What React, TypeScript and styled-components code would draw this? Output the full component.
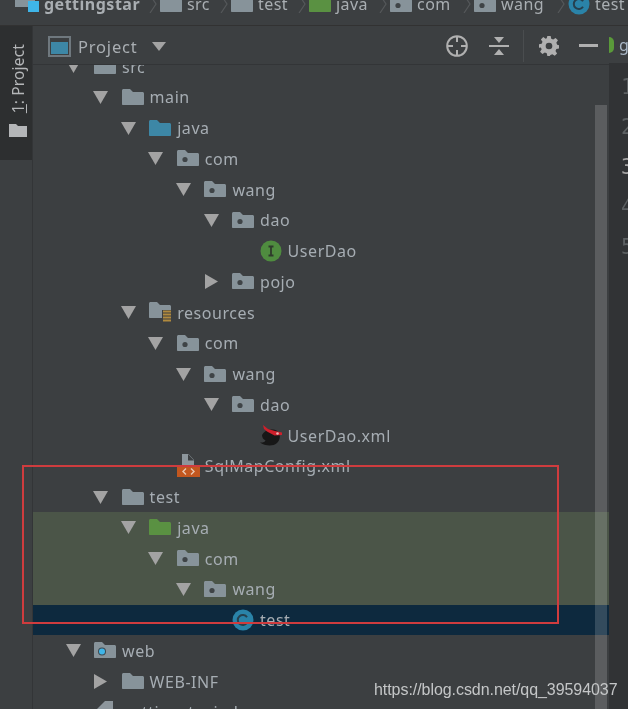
import React from "react";
import styled, { createGlobalStyle } from "styled-components";

const Global = createGlobalStyle`
  html, body { margin: 0; padding: 0; background: #3c3f41; }
  #root { width: 628px; height: 709px; overflow: hidden; }
`;

const FONT = `"Noto Sans", "DejaVu Sans", sans-serif`;

const Window = styled.div`
  position: relative;
  width: 628px;
  height: 709px;
  overflow: hidden;
  display: flex;
  flex-direction: column;
  background: #3c3f41;
  color: #a6adb3;
  font-family: ${FONT};
  filter: blur(0.45px);
`;

const Breadcrumb = styled.div`
  flex: none;
  height: 26px;
  box-sizing: border-box;
  border-bottom: 1px solid #323232;
  overflow: hidden;
  background: #3c3f41;
`;
const CrumbTrail = styled.div`
  display: flex;
  align-items: center;
  height: 18px;
  margin-top: -5px;
  padding-left: 15px;
`;
const Crumb = styled.span<{ $w: number }>`
  flex: none;
  width: ${(p) => p.$w}px;
  display: flex;
  align-items: center;
  gap: 5px;
  font-size: 16px;
  line-height: 18px;
  color: #a9aeb2;
`;
const CrumbName = styled.span<{ $bold?: boolean }>`
  font-weight: ${(p) => (p.$bold ? 700 : 400)};
  letter-spacing: ${(p) => (p.$bold ? "0.5px" : "0.45px")};
`;
const Chevron = styled.svg`
  flex: none;
  width: 10px;
  height: 18px;
  margin-left: -12px;
  margin-right: 2px;
`;

const Body = styled.div`
  flex: 1;
  min-height: 0;
  display: flex;
`;
const Strip = styled.aside`
  flex: none;
  width: 33px;
  box-sizing: border-box;
  border-right: 1px solid #333537;
  background: #3c3f41;
`;
const StripTab = styled.div`
  height: 134px;
  background: #2d2f30;
  display: flex;
  flex-direction: column;
  align-items: center;
  padding: 18px 0 0 4px;
  box-sizing: border-box;
  gap: 10px;
`;
const StripLabel = styled.span`
  writing-mode: vertical-rl;
  transform: rotate(180deg);
  font-size: 15.5px;
  line-height: 20px;
  color: #b4b6b8;
  letter-spacing: 0.15px;
`;
const Underlined = styled.span`
  text-decoration: underline;
`;

const Panel = styled.section`
  position: relative;
  flex: none;
  width: 576px;
  display: flex;
  flex-direction: column;
  overflow: hidden;
`;
const PanelHeader = styled.header`
  position: relative;
  z-index: 1;
  flex: none;
  height: 39px;
  box-sizing: border-box;
  display: flex;
  align-items: center;
  padding: 2px 11px 0 15px;
  border-bottom: 1px solid #333537;
  background: #3c3f41;
`;
const PanelTitle = styled.span`
  margin-left: 7px;
  font-size: 16.5px;
  color: #a9aeb2;
  letter-spacing: 0.8px;
`;
const Caret = styled.svg`
  width: 14px;
  height: 9px;
  margin-left: 14px;
`;
const HeaderTools = styled.div`
  margin-left: auto;
  display: flex;
  align-items: center;
`;
const Divider = styled.span`
  width: 1px;
  height: 32px;
  background: #4a4d4f;
  margin: 0 15px 0 14px;
`;

const Tree = styled.div`
  flex: 1;
  min-height: 0;
  margin-top: -13.8px;
`;
const Row = styled.div<{ $tone?: "green" | "selected" }>`
  height: 30.75px;
  display: flex;
  align-items: center;
  background: ${(p) =>
    p.$tone === "green" ? "#4b5548" : p.$tone === "selected" ? "#0d293e" : "transparent"};
`;
const Indent = styled.span<{ $depth: number }>`
  flex: none;
  width: ${(p) => 32 + p.$depth * 27.6}px;
`;
const ArrowSlot = styled.span`
  flex: none;
  width: 16px;
  height: 16px;
  margin-right: 13px;
  display: flex;
  align-items: center;
  justify-content: center;
`;
const IconSlot = styled.span`
  flex: none;
  width: 22px;
  height: 22px;
  display: flex;
  align-items: center;
  justify-content: center;
`;
const Label = styled.span`
  margin-left: 6px;
  font-size: 16px;
  line-height: 20px;
  letter-spacing: 0.55px;
  color: #a6adb3;
  white-space: nowrap;
`;

const Scrollbar = styled.div`
  position: absolute;
  z-index: 2;
  right: 2px;
  top: 79px;
  bottom: 0;
  width: 12px;
  background: rgba(255, 255, 255, 0.16);
`;

const Editor = styled.aside`
  flex: 1;
  min-width: 0;
  display: flex;
  flex-direction: column;
  background: #313335;
  overflow: hidden;
`;
const EditorTab = styled.div`
  flex: none;
  height: 37px;
  display: flex;
  align-items: center;
  gap: 5px;
  background: #3c3f41;
  font-size: 16px;
  color: #a9b7c6;
`;
const TabDot = styled.span`
  flex: none;
  width: 5px;
  height: 16px;
  background: #5a9a3a;
  border-radius: 0 8px 8px 0;
`;
const LineNumbers = styled.div`
  padding: 4px 0 0 12px;
  display: flex;
  flex-direction: column;
  font-family: "DejaVu Sans Mono", monospace;
  font-size: 21px;
  white-space: nowrap;
`;
const LineNumber = styled.span<{ $active?: boolean }>`
  height: 40px;
  line-height: 40px;
  color: ${(p) => (p.$active ? "#a4a3a3" : "#5c6062")};
`;

const Annotation = styled.div`
  position: absolute;
  z-index: 3;
  left: 22px;
  top: 465px;
  width: 537px;
  height: 159px;
  box-sizing: border-box;
  border: 2px solid #cf3c3e;
`;
const Watermark = styled.div`
  position: absolute;
  z-index: 4;
  left: 374px;
  top: 680px;
  font-family: "Liberation Sans", Arial, sans-serif;
  font-size: 16px;
  line-height: 20px;
  letter-spacing: -0.06px;
  color: #c4c6c7;
  white-space: nowrap;
`;

type IconKind =
  | "folder" | "blue" | "green" | "pkg" | "res" | "iface" | "cls" | "bird" | "xml" | "web" | "file";

const FOLDER = "M0 1.5C0 .7.7 0 1.5 0H8l3 3h9.5c.8 0 1.5.7 1.5 1.5V15c0 .6-.4 1-1 1H1c-.6 0-1-.4-1-1z";

const Folder = ({ fill = "#87939a", dot, w = 22 }: { fill?: string; dot?: string; w?: number }) => (
  <svg width={w} height={(w * 17) / 22} viewBox="0 0 22 17">
    <path d={FOLDER} fill={fill} />
    {dot === "dark" && <circle cx="8" cy="9.5" r="2.6" fill="#3f4447" />}
    {dot === "blue" && (
      <>
        <circle cx="8" cy="9.5" r="4" fill="#3c4a52" />
        <circle cx="8" cy="9.5" r="3" fill="#3fb5e8" />
      </>
    )}
  </svg>
);

const Icon = ({ kind }: { kind: IconKind }) => {
  switch (kind) {
    case "folder":
      return <Folder />;
    case "blue":
      return <Folder fill="#3d87a6" />;
    case "green":
      return <Folder fill="#5a9142" />;
    case "pkg":
      return <Folder dot="dark" />;
    case "web":
      return <Folder dot="blue" />;
    case "res":
      return (
        <svg width="22" height="21" viewBox="0 0 22 21">
          <path d={FOLDER} fill="#87939a" />
          <rect x="13" y="8" width="9" height="12.5" fill="#3c3f41" />
          <path d="M14 9.5h8M14 12.5h8M14 15.5h8M14 18.5h8" stroke="#b08a3e" strokeWidth="2" />
        </svg>
      );
    case "iface":
      return (
        <svg width="22" height="22" viewBox="0 0 22 22">
          <circle cx="11" cy="11" r="10.5" fill="#4f8c3f" />
          <path d="M8.5 6.5h5M8.5 15.5h5M11 6.5v9" stroke="#2f3a2c" strokeWidth="1.8" fill="none" />
        </svg>
      );
    case "cls":
      return (
        <svg width="22" height="22" viewBox="0 0 22 22">
          <circle cx="11" cy="11" r="10.5" fill="#2a83a8" />
          <path d="M15 8.3A5 5 0 1 0 15 13.7" stroke="#26404e" strokeWidth="2" fill="none" />
        </svg>
      );
    case "bird":
      return (
        <svg width="24" height="24" viewBox="0 0 24 24" style={{ flex: "none" }}>
          <path d="M3 11c2-4 6-6 11-5.500 4.500.5 7 3.500 6.800 7.500-.3 5-4.500 8.500-10 8.500-3.500 0-7.500-1-9.800-3 2.800.3 4.800-.4 5.500-2-2-1-3.500-2.800-3.500-5.500z" fill="#171717" />
          <path d="M4 1l5 4 7 2 7 1.500V11l-7.500.5L8 7.500 5 5z" fill="#cf1f2b" />
          <circle cx="18.500" cy="9.500" r="1.300" fill="#ecb7b7" />
        </svg>
      );
    case "xml":
      return (
        <svg width="24" height="24" viewBox="0 0 24 24" style={{ flex: "none" }}>
          <path d="M6 0h6.500L18 6v8H6z" fill="#8d969c" />
          <path d="M12 0v6.500h6z" fill="#3c3f41" />
          <rect x="1" y="12" width="23" height="11" fill="#c2571f" />
          <path d="M10 14.500L7 17.500l3 3M15 14.500l3 3-3 3" stroke="#e8c9b4" strokeWidth="1.400" fill="none" />
        </svg>
      );
    case "file":
      return (
        <svg width="22" height="22" viewBox="0 0 22 22">
          <path d="M3 8l8-8h8v22H3z" fill="#8d969c" />
        </svg>
      );
  }
};

const DownArrow = () => (
  <svg width="15" height="13" viewBox="0 0 15 13">
    <path d="M0 0h15L7.500 13z" fill="#a3a3a3" />
  </svg>
);
const RightArrow = () => (
  <svg width="13" height="15" viewBox="0 0 13 15">
    <path d="M0 0l13 7.500L0 15z" fill="#a3a3a3" />
  </svg>
);

type Node = {
  depth: number;
  arrow?: "down" | "right";
  icon: IconKind;
  label: string;
  tone?: "green" | "selected";
};

const nodes: Node[] = [
  { depth: 0, arrow: "down", icon: "folder", label: "src" },
  { depth: 1, arrow: "down", icon: "folder", label: "main" },
  { depth: 2, arrow: "down", icon: "blue", label: "java" },
  { depth: 3, arrow: "down", icon: "pkg", label: "com" },
  { depth: 4, arrow: "down", icon: "pkg", label: "wang" },
  { depth: 5, arrow: "down", icon: "pkg", label: "dao" },
  { depth: 6, icon: "iface", label: "UserDao" },
  { depth: 5, arrow: "right", icon: "pkg", label: "pojo" },
  { depth: 2, arrow: "down", icon: "res", label: "resources" },
  { depth: 3, arrow: "down", icon: "pkg", label: "com" },
  { depth: 4, arrow: "down", icon: "pkg", label: "wang" },
  { depth: 5, arrow: "down", icon: "pkg", label: "dao" },
  { depth: 6, icon: "bird", label: "UserDao.xml" },
  { depth: 3, icon: "xml", label: "SqlMapConfig.xml" },
  { depth: 1, arrow: "down", icon: "folder", label: "test" },
  { depth: 2, arrow: "down", icon: "green", label: "java", tone: "green" },
  { depth: 3, arrow: "down", icon: "pkg", label: "com", tone: "green" },
  { depth: 4, arrow: "down", icon: "pkg", label: "wang", tone: "green" },
  { depth: 5, icon: "cls", label: "test", tone: "selected" },
  { depth: 0, arrow: "down", icon: "web", label: "web" },
  { depth: 1, arrow: "right", icon: "folder", label: "WEB-INF" },
  { depth: 0, icon: "file", label: "gettingstar.iml" },
];

const crumbs: { w: number; icon: React.ReactNode; name: string; bold?: boolean }[] = [
  {
    w: 145,
    icon: (
      <svg width="24" height="16" viewBox="0 0 24 16">
        <rect width="20" height="11" fill="#87939a" />
        <rect x="13" y="5" width="11" height="11" fill="#3fb5e8" />
      </svg>
    ),
    name: "gettingstar",
    bold: true,
  },
  { w: 71, icon: <Folder w={22} />, name: "src" },
  { w: 78, icon: <Folder w={22} />, name: "test" },
  { w: 81, icon: <Folder w={22} fill="#5a9142" />, name: "java" },
  { w: 84, icon: <Folder w={22} dot="dark" />, name: "com" },
  { w: 94, icon: <Folder w={22} dot="dark" />, name: "wang" },
  {
    w: 70,
    icon: (
      <svg width="22" height="22" viewBox="0 0 22 22">
        <circle cx="11" cy="11" r="10.5" fill="#2a83a8" />
        <path d="M15 8.300A5 5 0 1 0 15 13.700" stroke="#26404e" strokeWidth="2" fill="none" />
      </svg>
    ),
    name: "test",
  },
];

export default function App() {
  return (
    <Window>
      <Global />
      <Breadcrumb>
        <CrumbTrail>
          {crumbs.map((c, i) => (
            <React.Fragment key={i}>
              <Crumb $w={c.w}>
                {c.icon}
                <CrumbName $bold={c.bold}>{c.name}</CrumbName>
              </Crumb>
              {i < crumbs.length - 1 && (
                <Chevron viewBox="0 0 10 18">
                  <path d="M2 0l6 9-6 9" stroke="#55585a" strokeWidth="1.200" fill="none" />
                </Chevron>
              )}
            </React.Fragment>
          ))}
        </CrumbTrail>
      </Breadcrumb>
      <Body>
        <Strip>
          <StripTab>
            <StripLabel>
              <Underlined>1</Underlined>: Project
            </StripLabel>
            <svg width="18" height="14" viewBox="0 0 18 14">
              <path d="M0 1h7l2 2h9v11H0z" fill="#b4b6b8" />
            </svg>
          </StripTab>
        </Strip>
        <Panel>
          <PanelHeader>
            <svg width="23" height="21" viewBox="0 0 23 21">
              <rect x="1" y="1" width="21" height="19" fill="none" stroke="#6f787e" strokeWidth="2" />
              <rect x="3" y="6" width="17" height="12" fill="#3d87a6" />
            </svg>
            <PanelTitle>Project</PanelTitle>
            <Caret viewBox="0 0 14 9">
              <path d="M0 0h14L7 9z" fill="#a3a3a3" />
            </Caret>
            <HeaderTools>
              <svg width="24" height="24" viewBox="0 0 24 24">
                <circle cx="12" cy="12" r="9.800" fill="none" stroke="#b0b0b0" strokeWidth="2" />
                <path d="M12 2v6M12 16v6M2 12h6M16 12h6" stroke="#b0b0b0" strokeWidth="2" />
              </svg>
              <svg width="20" height="22" viewBox="0 0 20 22" style={{ marginLeft: 20 }}>
                <path d="M0 11h20" stroke="#b0b0b0" strokeWidth="2" />
                <path d="M5 2h10l-5 6zM5 20h10l-5-6z" fill="#b0b0b0" />
              </svg>
              <Divider />
              <svg width="20" height="20" viewBox="0 0 24 24">
                <path
                  fillRule="evenodd"
                  d="M10 0h4l.7 3.300 2.300 1L19.900 2.400l2.800 2.800-1.900 2.900 1 2.300L24 11v4l-3.200.7-1 2.300 1.900 2.900-2.800 2.800-2.900-1.900-2.300 1L13 24h-3l-.7-3.200-2.300-1-2.900 1.900-2.800-2.800 1.900-2.900-1-2.300L0 14v-4l3.200-.7 1-2.300-1.900-2.900L5.100 1.300 8 3.200l1.300-.5z M12 8a4 4 0 1 0 0 8 4 4 0 0 0 0-8z"
                  fill="#b0b0b0"
                />
              </svg>
              <svg width="19" height="4" viewBox="0 0 19 4" style={{ marginLeft: 20 }}>
                <rect width="19" height="3" fill="#b0b0b0" />
              </svg>
            </HeaderTools>
          </PanelHeader>
          <Tree>
            {nodes.map((n, i) => (
              <Row key={i} $tone={n.tone}>
                <Indent $depth={n.depth} />
                <ArrowSlot>
                  {n.arrow === "down" && <DownArrow />}
                  {n.arrow === "right" && <RightArrow />}
                </ArrowSlot>
                <IconSlot>
                  <Icon kind={n.icon} />
                </IconSlot>
                <Label>{n.label}</Label>
              </Row>
            ))}
          </Tree>
          <Scrollbar />
        </Panel>
        <Editor>
          <EditorTab>
            <TabDot />g
          </EditorTab>
          <LineNumbers>
            {[1, 2, 3, 4, 5].map((n) => (
              <LineNumber key={n} $active={n === 3}>
                {n}
              </LineNumber>
            ))}
          </LineNumbers>
        </Editor>
      </Body>
      <Annotation />
      <Watermark>https://blog.csdn.net/qq_39594037</Watermark>
    </Window>
  );
}
